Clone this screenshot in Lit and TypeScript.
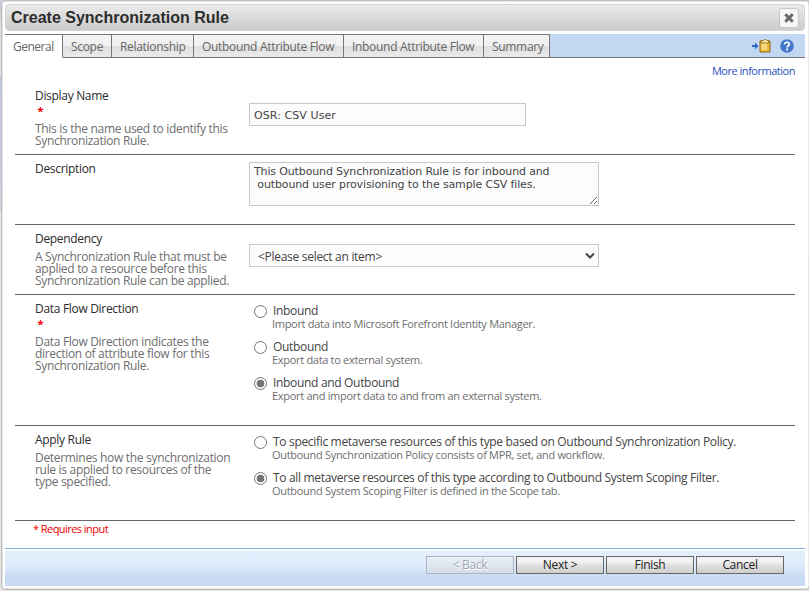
import { LitElement, html, css } from "lit";
import { customElement, state } from "lit/decorators.js";
import { classMap } from "lit/directives/class-map.js";

interface Choice { label: string; note: string }

const TABS: [string, string][] = [
  ["General", "58px"], ["Scope", "49px"], ["Relationship", "82px"],
  ["Outbound Attribute Flow", "150px"], ["Inbound Attribute Flow", "140px"], ["Summary", "66px"],
];
const DIRECTIONS: Choice[] = [
  { label: "Inbound", note: "Import data into Microsoft Forefront Identity Manager." },
  { label: "Outbound", note: "Export data to external system." },
  { label: "Inbound and Outbound", note: "Export and import data to and from an external system." },
];
const SCOPES: Choice[] = [
  {
    label: "To specific metaverse resources of this type based on Outbound Synchronization Policy.",
    note: "Outbound Synchronization Policy consists of MPR, set, and workflow.",
  },
  {
    label: "To all metaverse resources of this type according to Outbound System Scoping Filter.",
    note: "Outbound System Scoping Filter is defined in the Scope tab.",
  },
];

@customElement("app-root")
export class AppRoot extends LitElement {
  @state() private tab = 0;
  @state() private direction = 2;
  @state() private scope = 1;

  static styles = css`
    * { box-sizing: border-box; }
    :host {
      display: block; width: 809px; height: 591px; overflow: hidden; padding-left: 1px;
      background: linear-gradient(#cbd2de 0 20px, #dce1e9 20px 75px, #bccadf 76px, #cad4e5 210px, #e8e8e8 214px 100%);
      font: 12px/12px "Open Sans", sans-serif; letter-spacing: -0.31px; color: #333;
    }
    .dialog {
      display: flex; flex-direction: column; height: 590px; padding: 3px 4px 3px 3px;
      border: 1px solid #bdbdbd; border-radius: 4px; background: #fff;
      box-shadow: inset 0 0 0 0.5px #ccc;
    }
    .title {
      display: flex; align-items: center; justify-content: space-between; flex: none;
      height: 27px; padding: 0 5px 0 5px; border: 1px solid #d4d4d4; border-radius: 4px;
      background: linear-gradient(#ebebeb, #cbcbcb);
      font: bold 16px/24px "Liberation Sans", sans-serif; letter-spacing: 0; color: #2d2d2d;
    }
    .close {
      display: grid; place-items: center; width: 20px; height: 20px; padding: 0; margin-top: 1px;
      border: 1px solid #c8c8c8; border-radius: 3px; background: #f6f6f6;
    }
    .bar { display: flex; flex: none; height: 24px; margin-top: 3px; }
    .tab {
      flex: none; height: 24px; padding: 1px 0 0 8px; border: 1px solid #777; border-left: 0;
      background: linear-gradient(#f1f1f1 0 50%, #dedede 51%, #ebebeb);
      font: inherit; letter-spacing: inherit; text-align: left; color: #666; white-space: nowrap;
    }
    .tab.on { width: 57px; border-bottom-color: #fff; background: #fff; letter-spacing: -0.5px; }
    .tools {
      display: flex; flex: 1; align-items: center; justify-content: flex-end; gap: 9px;
      padding: 1px 11px 0 0; border-bottom: 1px solid #777; background: #c2d7f2;
    }
    .body { flex: 1; padding: 0 10px; }
    .more { height: 28px; padding-top: 7px; text-align: right; font-size: 11px; letter-spacing: -0.48px; color: #2a50bd; }
    section {
      display: grid; grid-template-columns: 214px 1fr; height: 70px; padding: 8px 0 0 20px;
      border-bottom: 1px solid #666;
    }
    .name { height: 69px; padding-top: 4px; }
    .flow { height: 131px; }
    .apply { height: 95px; }
    h2 { margin: 0; font: inherit; color: #2b2b2b; }
    .star { height: 15px; padding: 3px 0 0 2.5px; font-size: 11px; line-height: 12px; font-weight: bold; color: #e00; }
    p { margin: 6px 0 0; color: #6e6e6e; white-space: pre-line; }
    .field {
      display: block; border: 1px solid #c8c8c8; background: #fcfcfc; padding: 0 4px;
      font: 11px/13px "DejaVu Sans", sans-serif; letter-spacing: -0.14px; color: #444; outline: 0; border-radius: 0;
    }
    .line { width: 277px; height: 23px; margin-top: 13px; padding-top: 1px; letter-spacing: 0.08px; }
    .area { width: 350px; height: 44px; margin-top: -1px; padding-top: 2px; resize: both; overflow: hidden; }
    .pick {
      display: flex; align-items: center; justify-content: space-between;
      width: 350px; height: 23px; margin-top: 11px; padding: 0 3px 0 8px;
      font: 12px/12px "Open Sans", sans-serif; letter-spacing: -0.29px;
    }
    .pick span { padding-top: 3px; }
    .choice { display: grid; grid-template-columns: 19px 1fr; height: 36px; padding: 1px 0 0 5px; cursor: pointer; }
    .dot { width: 13px; height: 13px; margin-top: 1px; border: 1px solid #767676; border-radius: 50%; background: #fff; }
    .dot.on { background: radial-gradient(circle, #767676 0 3.6px, #fff 4.2px); }
    .label { line-height: 13px; color: #444; letter-spacing: -0.32px; }
    .note { margin-left: -1px; font-size: 11px; line-height: 13px; letter-spacing: -0.3px; color: #6e6e6e; }
    .req { padding: 2px 0 0 18px; font-size: 11px; letter-spacing: -0.55px; color: #e00; }
    footer {
      display: flex; flex: none; justify-content: flex-end; gap: 2px; height: 38px; padding: 7px 21px 0 0;
      border-top: 1px solid #82a8d8; background: linear-gradient(#fff 0 1px, #e5f0fd 2px, #deebfb 15px, #c9dbf2 28px, #c5d9f1);
    }
    .btn {
      width: 88px; height: 18px; padding: 0 0 1px; border: 1px solid #666;
      background: linear-gradient(#f2f2f2 0 30%, #dedede 55%, #cfcfcf);
      font: inherit; line-height: 15px; letter-spacing: inherit; color: #222;
    }
    .btn:disabled { border-color: #aeb5bf; background: linear-gradient(#e9eff6, #d4dde8); color: #a2a8b0; text-shadow: 1px 1px #fff; }
  `;

  private choices(list: Choice[], chosen: number, pick: (i: number) => void) {
    return html`<div>${list.map((c, i) => html`
      <div class="choice" role="radio" aria-checked=${i === chosen} @click=${() => pick(i)}>
        <div class=${classMap({ dot: true, on: i === chosen })}></div>
        <div><div class="label">${c.label}</div><div class="note">${c.note}</div></div>
      </div>`)}</div>`;
  }

  render() {
    return html`
      <div class="dialog">
        <div class="title">
          <span>Create Synchronization Rule</span>
          <button class="close" aria-label="Close">
            <svg width="10" height="10" viewBox="0 0 10 10"><path d="M1.3 1.3 8.7 8.7M8.7 1.3 1.3 8.7" stroke="#666" stroke-width="3"/></svg>
          </button>
        </div>
        <div class="bar">
          ${TABS.map(([name, width], i) => html`<button style="width:${width}"
            class=${classMap({ tab: true, on: i === this.tab })} @click=${() => (this.tab = i)}>${name}</button>`)}
          <div class="tools">
            <svg width="19" height="14" viewBox="0 0 19 14">
              <path d="M0 6h3V3.5L6.5 7 3 10.5V8H0z" fill="#2f68c4"/>
              <path d="M8 2h10v11H8z" fill="#efb93c" stroke="#8c6316"/>
              <path d="M9 3h6v8H9z" fill="#f9d678"/>
              <path d="M9.5 1.5h2l1-1h1.5l1 1h1.5V4h-7z" fill="#f5e59c" stroke="#8c6316" stroke-width=".8"/>
            </svg>
            <svg width="14" height="14" viewBox="0 0 14 14">
              <circle cx="7" cy="7" r="6.8" fill="#4478cc"/>
              <path d="M4.8 5.3C4.8 2.6 9.3 2.6 9.3 5.2 9.3 6.8 7.1 6.8 7.1 8.5" fill="none" stroke="#fff" stroke-width="1.7"/>
              <path d="M6.2 9.6h1.8v1.8H6.2z" fill="#fff"/>
            </svg>
          </div>
        </div>
        <div class="body">
          <div class="more">More information</div>
          <section class="name">
            <div><h2>Display Name</h2><div class="star">*</div><p>This is the name used to identify this
Synchronization Rule.</p></div>
            <input class="field line" .value=${"OSR: CSV User"}>
          </section>
          <section>
            <h2>Description</h2>
            <textarea class="field area" spellcheck="false" .value=${"This Outbound Synchronization Rule is for inbound and\n outbound user provisioning to the sample CSV files."}></textarea>
          </section>
          <section>
            <div><h2>Dependency</h2><p>A Synchronization Rule that must be
applied to a resource before this
Synchronization Rule can be applied.</p></div>
            <div class="field pick"><span>&lt;Please select an item&gt;</span>
              <svg width="10" height="8" viewBox="0 0 10 8"><path d="M1 1.5 5 5.5 9 1.5" fill="none" stroke="#444" stroke-width="2"/></svg>
            </div>
          </section>
          <section class="flow">
            <div><h2>Data Flow Direction</h2><div class="star">*</div><p>Data Flow Direction indicates the
direction of attribute flow for this
Synchronization Rule.</p></div>
            ${this.choices(DIRECTIONS, this.direction, (i) => (this.direction = i))}
          </section>
          <section class="apply">
            <div><h2>Apply Rule</h2><p>Determines how the synchronization
rule is applied to resources of the
type specified.</p></div>
            ${this.choices(SCOPES, this.scope, (i) => (this.scope = i))}
          </section>
          <div class="req">* Requires input</div>
        </div>
        <footer>
          <button class="btn" disabled>&lt; Back</button>
          <button class="btn">Next &gt;</button>
          <button class="btn">Finish</button>
          <button class="btn">Cancel</button>
        </footer>
      </div>`;
  }
}
